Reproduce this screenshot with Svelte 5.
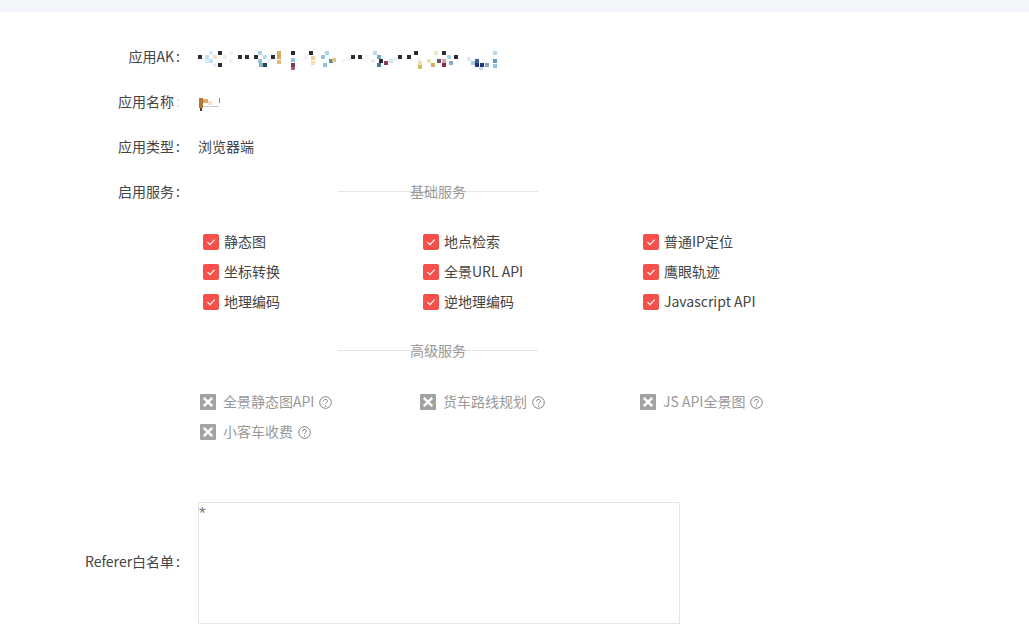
<script>
  const dark = [[197,54],[217,50],[217,62],[237,54],[244,54],[253,54],[270,54],[290,50],[308,50],[350,54],[357,54],[378,58],[397,54],[406,54],[413,50],[441,50],[453,54]];
  const tints = [
    [204,54,'#bfe0f5'],[208,50,'#d5ecfa'],[208,58,'#bfe0f5'],[204,58,'#d5ecfa'],[212,62,'#e3f1fa'],[212,54,'#f4dfc4'],[222,54,'#e3eef5'],[228,50,'#f0f3f5'],[228,58,'#eef3f5'],
    [257,50,'#a9d3ea'],[257,58,'#8fc3e0'],[262,54,'#bcdcee'],[258,62,'#7fb2cf'],[262,62,'#33444f'],[276,50,'#d9a85e'],[276,54,'#d9a85e'],[276,59,'#e3b878'],[266,58,'#e8f3f9'],
    [290,57,'#8fc3e0'],[290,62,'#7d3a4a'],[290,66,'#b06070'],[303,54,'#eef3f5'],[310,55,'#f0cf99'],[310,60,'#f3dcb4'],[320,54,'#8fc3e0'],[324,50,'#a9d3ea'],[328,58,'#4d8fb5'],[322,62,'#8fc3e0'],[331,57,'#e8c27e'],[346,56,'#eef3f5'],[340,58,'#f4f6f8'],
    [364,54,'#f0f3f5'],[372,50,'#bcdcee'],[376,54,'#6fa9cc'],[376,62,'#3f7fa8'],[383,60,'#8a3f50'],[388,58,'#d5e6f0'],[370,58,'#e3eef5'],[392,56,'#eef3f5'],[416,56,'#eef3f5'],[417,60,'#f0dfae'],[417,64,'#d9bb66'],[426,58,'#e9dfb0'],[430,62,'#c9b060'],[433,50,'#f0e8c0'],[436,58,'#70505e'],[441,58,'#d8a0aa'],[446,54,'#a9d3ea'],[441,62,'#8b2f45'],[448,60,'#7fb2cf'],
    [466,56,'#dde8ee'],[470,60,'#a9c9de'],[474,58,'#3a5f9a'],[474,62,'#22337a'],[479,62,'#22337a'],[484,62,'#7fa8c8'],[478,66,'#c5dcec'],[492,50,'#bcdcee'],[492,58,'#5f9fc6'],[492,63,'#8fc3e0']
  ];
  const checked = ['静态图','地点检索','普通IP定位','坐标转换','全景URL API','鹰眼轨迹','地理编码','逆地理编码','Javascript API'];
  const disabled = ['全景静态图API','货车路线规划','JS API全景图','小客车收费'];
</script>

<div class="band"></div>
<main class="form">
  <div class="row">
    <div class="label">应用AK<span class="colon">:</span></div>
    <svg class="mosaic" width="300" height="24" viewBox="197 45 300 24" aria-hidden="true">
      {#each tints as [x, y, c]}<rect {x} {y} width="4" height="4" fill={c} />{/each}
      {#each dark as [x, y]}<rect {x} {y} width="4" height="4" fill="#2b2b33" />{/each}
    </svg>
  </div>
  <div class="row">
    <div class="label">应用名称<span class="colon faint">:</span></div>
    <svg class="mosaic" width="24" height="20" viewBox="196 92 24 20" aria-hidden="true">
      <rect x="197" y="97" width="4" height="10" fill="#b5763a" />
      <rect x="198" y="107" width="2" height="3" fill="#4a3a30" />
      <rect x="201" y="98" width="5" height="4" fill="#e3a768" />
      <rect x="206" y="100" width="4" height="4" fill="#f6e2c8" />
      <rect x="201" y="105" width="16" height="1" fill="#c9c9c9" />
      <rect x="217" y="97" width="1" height="5" fill="#8a8a8a" />
    </svg>
  </div>
  <div class="row">
    <div class="label">应用类型<span class="colon">:</span></div>
    <div class="value">浏览器端</div>
  </div>
  <div class="row">
    <div class="label">启用服务<span class="colon">:</span></div>
    <div class="divider">基础服务</div>
  </div>

  <div class="services">
    {#each checked as name}
      <div class="svc">
        <span class="box">
          <svg width="16" height="16" viewBox="0 0 16 16" aria-hidden="true"><path d="M4.5 8.2 7 10.6 11.6 5.6" fill="none" stroke="#fff" stroke-width="1.1" /></svg>
        </span>
        <span class="name">{name}</span>
      </div>
    {/each}
  </div>

  <div class="row">
    <div class="label"></div>
    <div class="divider">高级服务</div>
  </div>

  <div class="services off">
    {#each disabled as name}
      <div class="svc">
        <span class="box">
          <svg width="16" height="16" viewBox="0 0 16 16" aria-hidden="true"><path d="M3.8 3.8 12.2 12.2M12.2 3.8 3.8 12.2" fill="none" stroke="#fff" stroke-width="2.4" /></svg>
        </span>
        <span class="name">{name}</span>
        <svg class="help" width="13" height="13" viewBox="0 0 13 13" aria-hidden="true">
          <circle cx="6.5" cy="6.5" r="5.8" fill="none" stroke="#808080" />
          <path d="M4.6 5.2a1.9 1.8 0 1 1 2.8 1.5c-.6.4-.9.7-.9 1.4" fill="none" stroke="#808080" />
          <circle cx="6.5" cy="9.9" r=".7" fill="#808080" />
        </svg>
      </div>
    {/each}
  </div>

  <div class="row referer">
    <div class="label">Referer白名单<span class="colon">:</span></div>
    <textarea readonly>*</textarea>
  </div>
</main>

<style>
  :global(body) {
    margin: 0;
    background: #fff;
    overflow: hidden;
  }
  .band {
    height: 12px;
    background: #f3f6fb;
  }
  .form {
    padding-top: 23px;
    font: 14px/20px "Noto Sans CJK SC", "Noto Sans", sans-serif;
    color: #444;
  }
  .row {
    display: grid;
    grid-template-columns: 180px 1fr;
    column-gap: 18px;
    align-items: center;
    height: 45px;
  }
  .label,
  .value {
    padding-bottom: 4px;
  }
  .label {
    text-align: right;
  }
  .colon {
    margin-left: 2px;
  }
  .faint {
    color: #ddd;
  }
  .mosaic {
    display: block;
    filter: blur(0.4px);
  }
  .divider {
    width: 200px;
    margin-left: 140px;
    padding-bottom: 3px;
    text-align: center;
    color: #999;
    background: linear-gradient(#e5e5e5, #e5e5e5) 0 10px / 100% 1px no-repeat;
  }
  .services {
    display: grid;
    grid-template-columns: repeat(3, 220px);
    grid-auto-rows: 30px;
    margin: 12px 0 12px 203px;
  }
  .svc {
    display: flex;
    align-items: center;
    gap: 5px;
  }
  .name {
    padding-bottom: 2px;
  }
  .box {
    flex: none;
    width: 16px;
    height: 16px;
    border-radius: 2px;
    background: #f5504a;
  }
  .box svg {
    display: block;
  }
  .off {
    margin: 13px 0 0 200px;
    color: #999;
  }
  .off .svc {
    gap: 7px;
  }
  .off .box {
    margin-top: -1px;
    background: #a3a3a3;
    border-radius: 1px;
  }
  .help {
    flex: none;
    margin-left: -2px;
  }
  .referer {
    height: 122px;
    margin-top: 55px;
  }
  textarea {
    box-sizing: border-box;
    display: block;
    width: 482px;
    height: 122px;
    margin: 0;
    padding: 2px 0 0 0;
    border: 1px solid #e5e5e5;
    outline: none;
    resize: none;
    font: 17px/18px "Liberation Sans", sans-serif;
    color: #777;
  }
</style>
